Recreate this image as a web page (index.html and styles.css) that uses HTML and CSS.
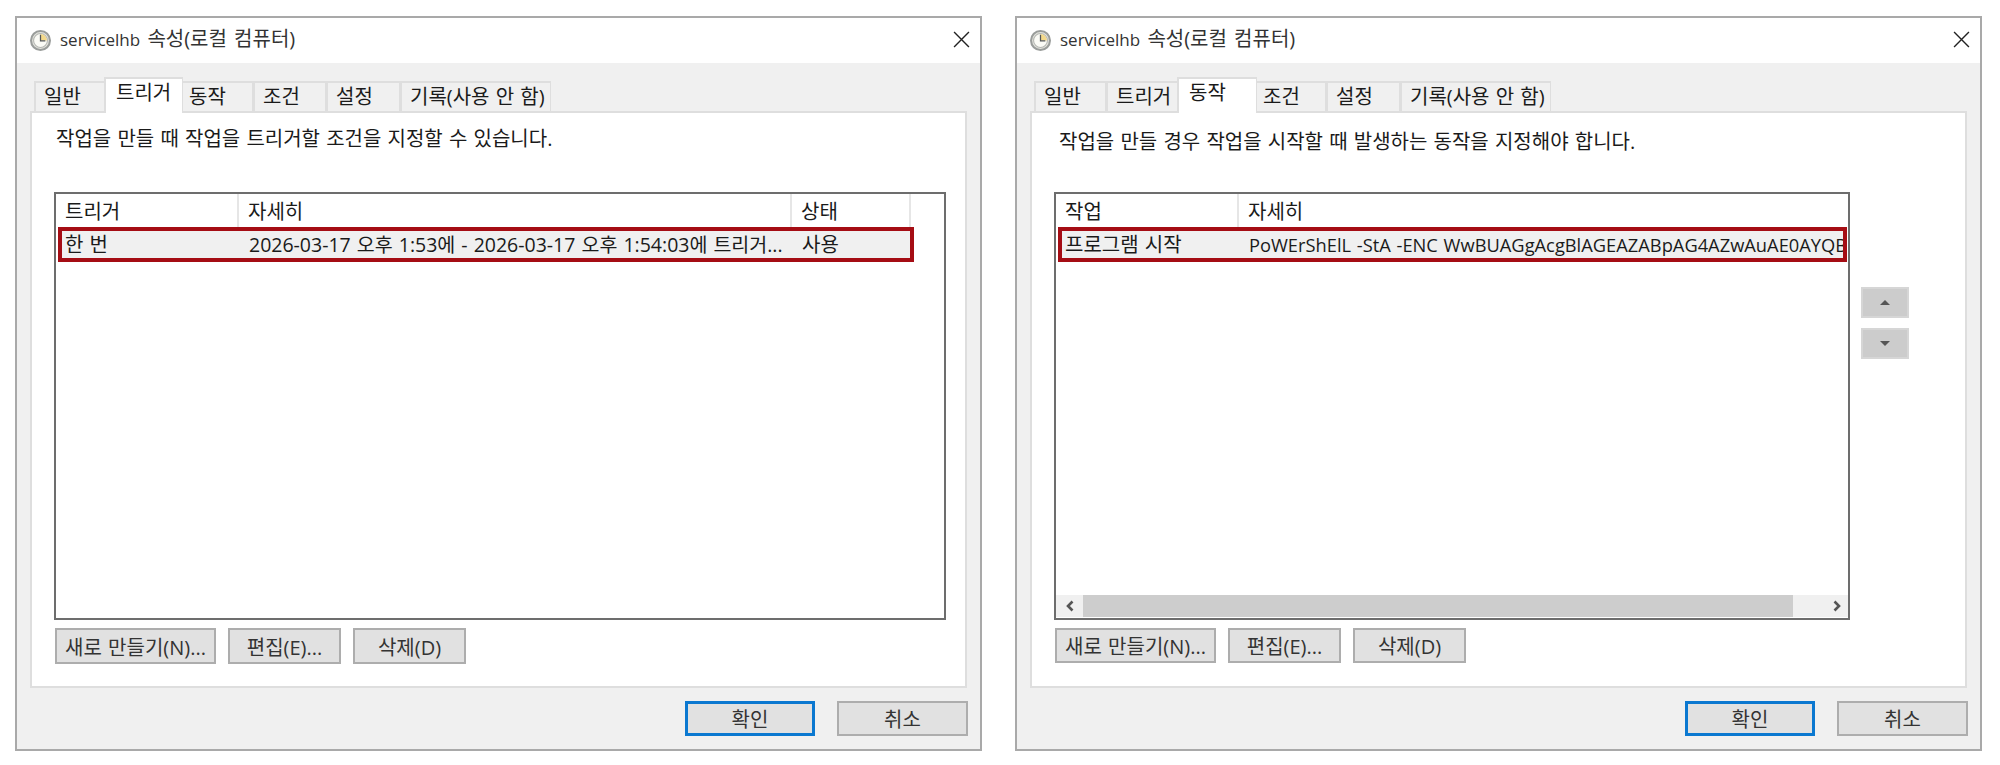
FILE: index.html
```html
<!DOCTYPE html>
<html lang="ko">
<head>
    <meta charset="UTF-8">
    <title>servicelhb 속성(로컬 컴퓨터)</title>
    <link rel="stylesheet" href="styles.css">
</head>
<body>
    <div class="window">
        <div class="title-bar">
            <svg class="clock" viewBox="0 0 20 20">
                <circle cx="10" cy="10" r="9" fill="#e4e4de" stroke="#9a9d9b" stroke-width="2"/>
                <circle cx="10" cy="10" r="6.6" fill="#fbfbf6" stroke="#b4b6b2"/>
                <path d="M10 3.8a6.2 6.2 0 0 1 6.2 6.2H10z" fill="#f3d98b"/>
                <path d="M10 4.5V10.4H14.6" fill="none" stroke="#55585a" stroke-width="1.2"/>
            </svg>
            <span class="title"><span class="title-name">servicelhb</span> 속성(로컬 컴퓨터)</span>
            <svg class="close" viewBox="0 0 16 16">
                <path d="M1 1L15 15M15 1L1 15" stroke="#222" stroke-width="1.3" fill="none"/>
            </svg>
        </div>
        <div class="content">
            <div class="tabs">
                <div class="tab">일반</div>
                <div class="tab active">트리거</div>
                <div class="tab">동작</div>
                <div class="tab">조건</div>
                <div class="tab">설정</div>
                <div class="tab">기록(사용 안 함)</div>
            </div>
            <div class="panel">
                <p class="desc">작업을 만들 때 작업을 트리거할 조건을 지정할 수 있습니다.</p>
                <div class="list">
                    <div class="list-head">
                        <div class="col col-name">트리거</div>
                        <div class="col col-detail">자세히</div>
                        <div class="col col-status">상태</div>
                    </div>
                    <div class="list-row">
                        <div class="cell col-name">한 번</div>
                        <div class="cell col-detail">2026-03-17 오후 1:53에 - 2026-03-17 오후 1:54:03에 트리거...</div>
                        <div class="cell col-status">사용</div>
                    </div>
                </div>
                <div class="actions">
                    <button class="btn btn-new">새로 만들기(N)...</button>
                    <button class="btn btn-small">편집(E)...</button>
                    <button class="btn btn-small">삭제(D)</button>
                </div>
            </div>
            <div class="footer">
                <button class="btn btn-main btn-ok">확인</button>
                <button class="btn btn-main">취소</button>
            </div>
        </div>
    </div>

    <div class="window">
        <div class="title-bar">
            <svg class="clock" viewBox="0 0 20 20">
                <circle cx="10" cy="10" r="9" fill="#e4e4de" stroke="#9a9d9b" stroke-width="2"/>
                <circle cx="10" cy="10" r="6.6" fill="#fbfbf6" stroke="#b4b6b2"/>
                <path d="M10 3.8a6.2 6.2 0 0 1 6.2 6.2H10z" fill="#f3d98b"/>
                <path d="M10 4.5V10.4H14.6" fill="none" stroke="#55585a" stroke-width="1.2"/>
            </svg>
            <span class="title"><span class="title-name">servicelhb</span> 속성(로컬 컴퓨터)</span>
            <svg class="close" viewBox="0 0 16 16">
                <path d="M1 1L15 15M15 1L1 15" stroke="#222" stroke-width="1.3" fill="none"/>
            </svg>
        </div>
        <div class="content">
            <div class="tabs">
                <div class="tab">일반</div>
                <div class="tab">트리거</div>
                <div class="tab active">동작</div>
                <div class="tab">조건</div>
                <div class="tab">설정</div>
                <div class="tab">기록(사용 안 함)</div>
            </div>
            <div class="panel panel-actions">
                <p class="desc">작업을 만들 경우 작업을 시작할 때 발생하는 동작을 지정해야 합니다.</p>
                <div class="list-wrap">
                    <div class="list list-scroll">
                        <div class="list-head">
                            <div class="col col-name">작업</div>
                            <div class="col col-rest">자세히</div>
                        </div>
                        <div class="list-row">
                            <div class="cell col-name">프로그램 시작</div>
                            <div class="cell col-rest command">PoWErShElL -StA -ENC WwBUAGgAcgBlAGEAZABpAG4AZwAuAE0AYQB</div>
                        </div>
                        <div class="scrollbar">
                            <div class="scroll-btn">
                                <svg viewBox="0 0 10 12"><path d="M7.5 1.5L3 6l4.5 4.5" fill="none" stroke="#555" stroke-width="2.6"/></svg>
                            </div>
                            <div class="scroll-thumb"></div>
                            <div class="scroll-btn scroll-btn-end">
                                <svg viewBox="0 0 10 12"><path d="M2.5 1.5L7 6l-4.5 4.5" fill="none" stroke="#555" stroke-width="2.6"/></svg>
                            </div>
                        </div>
                    </div>
                    <div class="order">
                        <div class="order-btn"><span class="arrow-up"></span></div>
                        <div class="order-btn"><span class="arrow-down"></span></div>
                    </div>
                </div>
                <div class="actions">
                    <button class="btn btn-new">새로 만들기(N)...</button>
                    <button class="btn btn-small">편집(E)...</button>
                    <button class="btn btn-small">삭제(D)</button>
                </div>
            </div>
            <div class="footer">
                <button class="btn btn-main btn-ok">확인</button>
                <button class="btn btn-main">취소</button>
            </div>
        </div>
    </div>
</body>
</html>
```

FILE: styles.css
```css
body {
    font-family: "Open Sans", "Noto Sans CJK KR", sans-serif;
    font-size: 20px;
    word-spacing: 1px;
    color: #1a1a1a;
    display: flex;
    gap: 33px;
    margin: 0;
    padding: 16px 0 0 15px;
    background-color: white;
}
.window {
    width: 967px;
    height: 735px;
    box-sizing: border-box;
    display: flex;
    flex-direction: column;
    border: 2px solid #a9a9a9;
    background-color: #f0f0f0;
}
.title-bar {
    height: 45px;
    flex-shrink: 0;
    display: flex;
    align-items: center;
    padding: 0 10px 0 13px;
    background-color: white;
}
.clock {
    width: 21px;
    height: 21px;
    margin-right: 9px;
}
.title {
    flex: 1;
    line-height: 26px;
    margin-top: -2px;
    word-spacing: 2px;
    color: #333;
}
.title-name {
    font-size: 17px;
}
.close {
    width: 17px;
    height: 17px;
    margin-top: -3px;
}
.content {
    flex: 1;
    display: flex;
    flex-direction: column;
    padding: 14px 13px 0 13px;
}
.tabs {
    display: grid;
    grid-template-columns: 72px 73px 74px 73px 74px 151px;
    align-items: end;
    height: 34px;
    padding-left: 4px;
}
.tab {
    height: 30px;
    box-sizing: border-box;
    padding-left: 8px;
    line-height: 27px;
    white-space: nowrap;
    background-color: #f0f0f0;
    border: 2px solid #dedede;
    border-bottom: none;
    border-right-width: 1px;
}
.tab.active {
    height: 36px;
    margin: 0 -4px -2px -2px;
    padding-left: 10px;
    line-height: 27px;
    background-color: white;
    z-index: 1;
}
.panel {
    height: 577px;
    box-sizing: border-box;
    padding: 13px 19px 0 22px;
    background-color: white;
    border: 2px solid #dedede;
}
.desc {
    margin: 0 0 40px 2px;
    height: 26px;
    line-height: 26px;
    white-space: nowrap;
}
.panel-actions .desc {
    margin: 3px 0 37px 5px;
}
.list {
    height: 428px;
    box-sizing: border-box;
    border: 2px solid #6d6d6d;
    position: relative;
    overflow: hidden;
}
.list-wrap {
    display: flex;
    gap: 11px;
}
.list-scroll {
    width: 796px;
}
.list-head {
    display: flex;
    height: 33px;
    line-height: 36px;
}
.col {
    box-sizing: border-box;
    border-right: 2px solid #e6e6e6;
    padding-left: 9px;
}
.col-name {
    width: 183px;
    flex-shrink: 0;
}
.col-detail {
    width: 553px;
    flex-shrink: 0;
}
.col-status {
    width: 119px;
    flex-shrink: 0;
}
.col-rest {
    flex: 1;
    border-right: none;
}
.list-row {
    display: flex;
    height: 35px;
    margin-left: 2px;
    width: 856px;
    box-sizing: border-box;
    border: 4px solid #a50d14;
    background-color: #f0f0f0;
    line-height: 27px;
    white-space: nowrap;
}
.list-scroll .list-row {
    width: 789px;
    overflow: hidden;
}
.cell {
    box-sizing: border-box;
    padding-left: 9px;
}
.list-row .col-name {
    width: 178px;
    padding-left: 3px;
}
.list-row .col-detail {
    font-size: 19.5px;
}
.list-row .col-status {
    width: 116px;
}
.command {
    font-size: 18.3px;
}
.scrollbar {
    position: absolute;
    left: 0;
    right: 0;
    bottom: 1px;
    height: 22px;
    display: flex;
    background-color: #f0f0f0;
}
.scroll-btn {
    width: 27px;
    display: flex;
    align-items: center;
    justify-content: center;
}
.scroll-btn svg {
    width: 10px;
    height: 12px;
}
.scroll-thumb {
    width: 710px;
    background-color: #cdcdcd;
}
.scroll-btn-end {
    flex: 1;
    justify-content: flex-end;
    padding-right: 6px;
}
.order {
    display: flex;
    flex-direction: column;
    gap: 10px;
    padding-top: 95px;
}
.order-btn {
    width: 48px;
    height: 31px;
    box-sizing: border-box;
    display: flex;
    align-items: center;
    justify-content: center;
    background-color: #cccccc;
    border: 2px solid #d6d6d6;
}
.arrow-up {
    border: 5px solid transparent;
    border-top: none;
    border-bottom: 5px solid #555;
}
.arrow-down {
    border: 5px solid transparent;
    border-bottom: none;
    border-top: 5px solid #555;
}
.actions {
    display: flex;
    gap: 12px;
    margin: 8px 0 0 1px;
}
.btn {
    box-sizing: border-box;
    height: 36px;
    padding: 0;
    font-family: inherit;
    font-size: 20px;
    word-spacing: 1px;
    white-space: nowrap;
    color: #333;
    background-color: #e1e1e1;
    border: 2px solid #adadad;
}
.btn-new {
    width: 161px;
}
.btn-small {
    width: 113px;
}
.panel-actions .btn {
    height: 35px;
}
.footer {
    display: flex;
    justify-content: flex-end;
    gap: 22px;
    margin: 13px -1px 0 0;
}
.btn-main {
    width: 131px;
    height: 35px;
}
.btn-ok {
    width: 130px;
    border: 3px solid #0b78d0;
}
```
